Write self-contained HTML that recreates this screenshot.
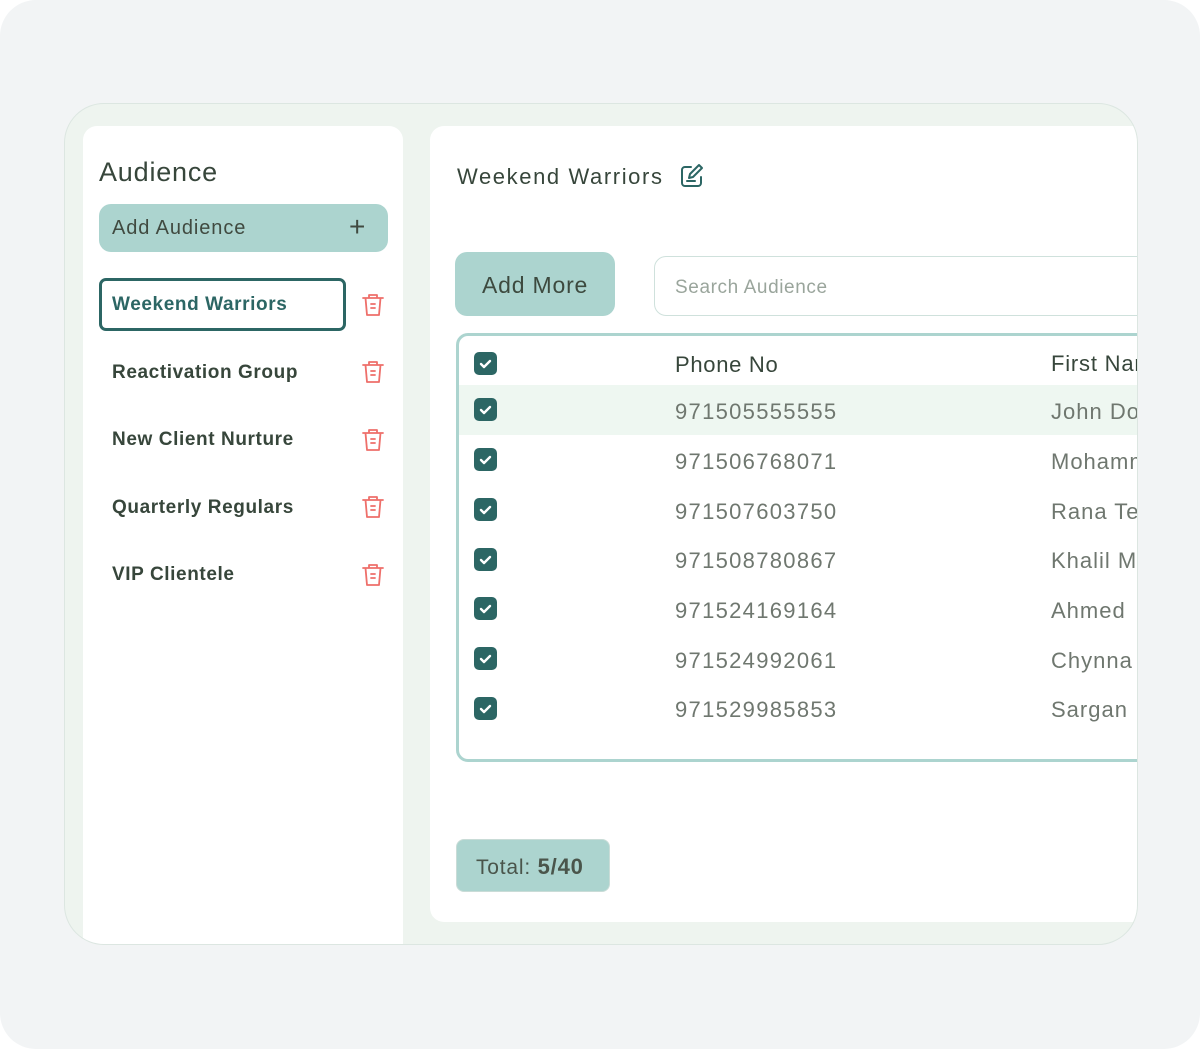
<!DOCTYPE html>
<html><head><style>
*{margin:0;padding:0;box-sizing:border-box}
html,body{width:1200px;height:1049px;background:#fff;overflow:hidden;font-family:"Liberation Sans",sans-serif}
.page{position:absolute;left:0;top:0;width:1200px;height:1049px;background:#f2f4f5;border-radius:36px}
.frame{position:absolute;left:64px;top:103px;width:1074px;height:842px;background:#eef4ef;border-radius:40px;overflow:hidden}
.fb{position:absolute;left:64px;top:103px;width:1074px;height:842px;border:1.5px solid #dce6e1;border-radius:40px;pointer-events:none}
.left{position:absolute;left:19px;top:23px;width:320px;height:830px;background:#fff;border-radius:14px 14px 0 0}
.right{position:absolute;left:366px;top:23px;width:760px;height:796px;background:#fff;border-radius:14px 0 0 14px}
.t{position:absolute;white-space:nowrap;color:#37463b}
.btn{position:absolute;background:#acd4cf;border-radius:12px}
.trash{position:absolute}
.cb{position:absolute;left:474px;width:23px;height:23px;background:#2c6664;border-radius:5px}
.cb svg{position:absolute;left:4px;top:4px}
.num{position:absolute;left:675px;font-size:22px;color:#6f776f;letter-spacing:1.3px;white-space:nowrap}
.nm{position:absolute;left:987px;font-size:22px;color:#6f776f;letter-spacing:1px;white-space:nowrap}
.lt{font-size:19px;font-weight:bold;letter-spacing:.6px}
</style></head><body>
<div class="page"></div>
<div class="frame">
<div class="left"></div>
<div class="right"></div>
<div style="position:absolute;left:392px;top:230px;width:760px;height:429px;border:3px solid #acd4cf;border-radius:12px;overflow:hidden">
<div style="position:absolute;left:0;top:49px;width:100%;height:50px;background:#eef7f1"></div></div>
<div style="position:absolute;left:590px;top:153px;width:520px;height:60px;border:1.5px solid #cfe1dc;border-radius:12px"></div>
<div class="t" style="left:987px;top:248px;font-size:22px;color:#37463b;letter-spacing:.8px">First Name</div>
<div class="nm" style="top:296px">John Doe</div>
<div class="nm" style="top:346px">Mohammed</div>
<div class="nm" style="top:396px">Rana Test</div>
<div class="nm" style="top:445px">Khalil M</div>
<div class="nm" style="top:495px">Ahmed</div>
<div class="nm" style="top:545px">Chynna</div>
<div class="nm" style="top:594px">Sargan</div>
</div>
<div class="fb"></div>
<div class="t" style="left:99px;top:157px;font-size:27px;color:#37463b;letter-spacing:.8px">Audience</div>
<div class="btn" style="left:99px;top:204px;width:289px;height:48px"></div>
<div class="t" style="left:112px;top:217px;font-size:20px;color:#404a40;letter-spacing:.9px">Add Audience</div>
<div class="t" style="left:349px;top:211px;font-size:28px;color:#404a40;font-weight:300">+</div>
<div style="position:absolute;left:99px;top:278px;width:247px;height:53px;border:3px solid #2c6664;border-radius:7px"></div>
<div class="t lt" style="left:112px;top:294px;color:#2c6664">Weekend Warriors</div>
<div class="t lt" style="left:112px;top:362px">Reactivation Group</div>
<div class="t lt" style="left:112px;top:429px">New Client Nurture</div>
<div class="t lt" style="left:112px;top:497px">Quarterly Regulars</div>
<div class="t lt" style="left:112px;top:564px">VIP Clientele</div>
<svg width="0" height="0" style="position:absolute"><defs><g id="tr" fill="none" stroke="#ee6f6a" stroke-width="1.8" stroke-linecap="round" stroke-linejoin="round"><path d="M2 6h20M8 6V3h8v3M4.5 6l1.5 17h12l1.5-17M10 12h4M10 16h4"/></g></defs></svg>
<svg class="trash" style="left:361px;top:292px" width="24" height="26"><use href="#tr"/></svg>
<svg class="trash" style="left:361px;top:359px" width="24" height="26"><use href="#tr"/></svg>
<svg class="trash" style="left:361px;top:427px" width="24" height="26"><use href="#tr"/></svg>
<svg class="trash" style="left:361px;top:494px" width="24" height="26"><use href="#tr"/></svg>
<svg class="trash" style="left:361px;top:562px" width="24" height="26"><use href="#tr"/></svg>

<div class="t" style="left:457px;top:164px;font-size:22px;color:#37463b;letter-spacing:1.6px">Weekend Warriors</div>
<svg style="position:absolute;left:680px;top:163px" width="25" height="26" fill="none" stroke="#2c6664" stroke-width="2" stroke-linecap="round" stroke-linejoin="round"><path d="M11 4H5a3 3 0 0 0-3 3v13a3 3 0 0 0 3 3h13a3 3 0 0 0 3-3v-6"/><path d="M19 2l3 3-9 9-4 1 1-4z"/><path d="M7 18h8"/></svg>
<div class="btn" style="left:455px;top:252px;width:160px;height:64px"></div>
<div class="t" style="left:482px;top:272px;font-size:23px;color:#3d4a3f;letter-spacing:.8px">Add More</div>
<div class="t" style="left:675px;top:277px;font-size:19px;color:#9aa59c;letter-spacing:.6px">Search Audience</div>
<div class="t" style="left:675px;top:352px;font-size:22px;color:#37463b;letter-spacing:.7px">Phone No</div>

<div class="cb" style="top:352px"><svg width="15" height="15" fill="none" stroke="#fff" stroke-width="2.4" stroke-linecap="round" stroke-linejoin="round"><path d="M3 8l3 3 6-6"/></svg></div>
<div class="cb" style="top:398px"><svg width="15" height="15" fill="none" stroke="#fff" stroke-width="2.4" stroke-linecap="round" stroke-linejoin="round"><path d="M3 8l3 3 6-6"/></svg></div>
<div class="cb" style="top:448px"><svg width="15" height="15" fill="none" stroke="#fff" stroke-width="2.4" stroke-linecap="round" stroke-linejoin="round"><path d="M3 8l3 3 6-6"/></svg></div>
<div class="cb" style="top:498px"><svg width="15" height="15" fill="none" stroke="#fff" stroke-width="2.4" stroke-linecap="round" stroke-linejoin="round"><path d="M3 8l3 3 6-6"/></svg></div>
<div class="cb" style="top:548px"><svg width="15" height="15" fill="none" stroke="#fff" stroke-width="2.4" stroke-linecap="round" stroke-linejoin="round"><path d="M3 8l3 3 6-6"/></svg></div>
<div class="cb" style="top:597px"><svg width="15" height="15" fill="none" stroke="#fff" stroke-width="2.4" stroke-linecap="round" stroke-linejoin="round"><path d="M3 8l3 3 6-6"/></svg></div>
<div class="cb" style="top:647px"><svg width="15" height="15" fill="none" stroke="#fff" stroke-width="2.4" stroke-linecap="round" stroke-linejoin="round"><path d="M3 8l3 3 6-6"/></svg></div>
<div class="cb" style="top:697px"><svg width="15" height="15" fill="none" stroke="#fff" stroke-width="2.4" stroke-linecap="round" stroke-linejoin="round"><path d="M3 8l3 3 6-6"/></svg></div>

<div class="num" style="top:399px">971505555555</div>
<div class="num" style="top:449px">971506768071</div>
<div class="num" style="top:499px">971507603750</div>
<div class="num" style="top:548px">971508780867</div>
<div class="num" style="top:598px">971524169164</div>
<div class="num" style="top:648px">971524992061</div>
<div class="num" style="top:697px">971529985853</div>

<div class="btn" style="left:456px;top:839px;width:154px;height:53px;border:1.5px solid #c9dcd7;border-radius:8px"></div>
<div class="t" style="left:476px;top:854px;font-size:21px;color:#4a554b;letter-spacing:.8px">Total: <b style="font-size:22px">5/40</b></div>
</body></html>
